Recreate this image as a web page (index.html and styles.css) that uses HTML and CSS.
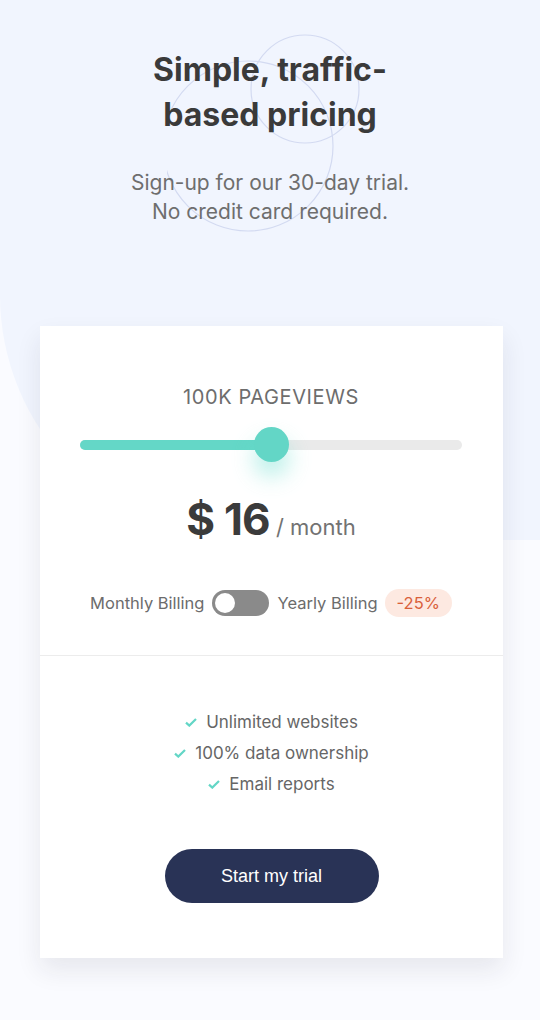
FILE: index.html
```html
<!DOCTYPE html>
<html lang="en">
<head>
<meta charset="utf-8">
<title>Pricing</title>
<link rel="stylesheet" href="styles.css">
</head>
<body>
<div class="page">
  <header class="hero">
    <svg class="circles" width="200" height="210" viewBox="0 0 200 210" aria-hidden="true">
      <circle cx="138" cy="60" r="54" fill="none" stroke="#d3daf1" stroke-width="1.2"/>
      <circle cx="81" cy="117" r="85" fill="none" stroke="#d3daf1" stroke-width="1.2"/>
    </svg>
    <h1 class="title">Simple, traffic-based pricing</h1>
    <p class="subtitle">Sign-up for our 30-day trial.<br>No credit card required.</p>
  </header>

  <main class="card">
    <section class="card-top">
      <p class="views">100K Pageviews</p>
      <div class="slider">
        <div class="track"><div class="fill" style="width:50%"></div></div>
        <span class="thumb" style="left:50%"></span>
      </div>
      <div class="price">
        <span class="amount">$ 16</span>
        <span class="period">/ month</span>
      </div>
      <div class="billing">
        <span class="billing-label">Monthly Billing</span>
        <span class="toggle"><span class="knob"></span></span>
        <span class="billing-label">Yearly Billing</span>
        <span class="badge">-25%</span>
      </div>
    </section>
    <section class="card-bottom">
      <ul class="features">
        <li><svg class="check" width="12" height="9" viewBox="0 0 12 9"><path d="M1 4.6l3.3 3L11 1" fill="none" stroke="#63d6c6" stroke-width="2.2"/></svg>Unlimited websites</li>
        <li><svg class="check" width="12" height="9" viewBox="0 0 12 9"><path d="M1 4.6l3.3 3L11 1" fill="none" stroke="#63d6c6" stroke-width="2.2"/></svg>100% data ownership</li>
        <li><svg class="check" width="12" height="9" viewBox="0 0 12 9"><path d="M1 4.6l3.3 3L11 1" fill="none" stroke="#63d6c6" stroke-width="2.2"/></svg>Email reports</li>
      </ul>
      <button class="cta" type="button">Start my trial</button>
    </section>
  </main>
</div>
</body>
</html>
```

FILE: styles.css
```css
* { box-sizing: border-box; }

html, body {
  margin: 0;
  padding: 0;
}

body {
  background: #fafbff;
  font-family: "Inter", "Noto Sans", sans-serif;
  color: #6f6f6f;
  min-height: 1020px;
}

.page {
  position: relative;
  min-height: 1020px;
  padding-bottom: 62px;
}

.page::before {
  content: "";
  position: absolute;
  top: 0;
  left: 0;
  right: 0;
  height: 540px;
  background: #f1f5fe;
  border-bottom-left-radius: 245px;
  z-index: 0;
}

.hero {
  position: relative;
  z-index: 1;
  padding-top: 47px;
  text-align: center;
}

.circles {
  position: absolute;
  left: 167px;
  top: 29px;
  z-index: -1;
}

.title {
  margin: 0 auto;
  max-width: 280px;
  font-size: 32px;
  line-height: 45px;
  font-weight: 700;
  letter-spacing: 0;
  color: #3a3a3a;
}

.subtitle {
  margin: 31px 0 0;
  font-size: 21px;
  line-height: 29px;
  color: #6e6e6e;
}

.card {
  position: relative;
  z-index: 1;
  width: 463px;
  margin: 100px 0 0 40px;
  background: #fff;
  box-shadow: 0 12px 24px rgba(30, 35, 60, 0.09);
}

.card-top {
  padding: 59px 41px 38px 40px;
  border-bottom: 1px solid #ececec;
  display: flex;
  flex-direction: column;
  align-items: center;
}

.views {
  margin: 0;
  font-size: 20px;
  line-height: 24px;
  letter-spacing: 0.6px;
  text-transform: uppercase;
  color: #6d6d6d;
}

.slider {
  position: relative;
  width: 100%;
  height: 35px;
  margin-top: 18px;
  display: flex;
  align-items: center;
}

.track {
  width: 100%;
  height: 10px;
  border-radius: 5px;
  background: #eaeaea;
  overflow: hidden;
}

.fill {
  height: 100%;
  background: #64d7c7;
}

.thumb {
  position: absolute;
  top: 0;
  width: 35px;
  height: 35px;
  margin-left: -17.5px;
  border-radius: 50%;
  background: #63d6c6;
  box-shadow: 0 14px 22px rgba(100, 220, 205, 0.45);
}

.price {
  margin-top: 31px;
  display: flex;
  align-items: baseline;
  gap: 6px;
}

.amount {
  font-size: 44px;
  line-height: 52px;
  font-weight: 700;
  letter-spacing: -0.8px;
  color: #3b3b3b;
}

.period {
  font-size: 22px;
  color: #727272;
}

.billing {
  margin-top: 44px;
  display: flex;
  align-items: center;
  gap: 8px;
}

.billing-label {
  font-size: 16.5px;
  color: #6c6c6c;
}

.toggle {
  display: flex;
  align-items: center;
  width: 57px;
  height: 26px;
  padding: 3px;
  border-radius: 13px;
  background: #8a8a8a;
}

.knob {
  width: 20px;
  height: 20px;
  border-radius: 50%;
  background: #fff;
}

.badge {
  margin-left: -1px;
  padding: 0 12px;
  height: 28px;
  line-height: 28px;
  border-radius: 14px;
  background: #fde9e1;
  color: #d9603a;
  font-size: 16.5px;
}

.card-bottom {
  padding: 51px 40px 55px;
  display: flex;
  flex-direction: column;
  align-items: center;
}

.features {
  list-style: none;
  margin: 0;
  padding: 0;
  text-align: center;
}

.features li {
  display: flex;
  justify-content: center;
  align-items: center;
  gap: 9px;
  font-size: 17px;
  line-height: 31px;
  color: #666;
}

.check {
  flex: none;
}

.cta {
  margin-top: 49px;
  width: 214px;
  height: 54px;
  border: 0;
  border-radius: 27px;
  background: #293356;
  color: #fff;
  font-family: "Liberation Sans", Arial, sans-serif;
  font-size: 18px;
  cursor: pointer;
}
```
